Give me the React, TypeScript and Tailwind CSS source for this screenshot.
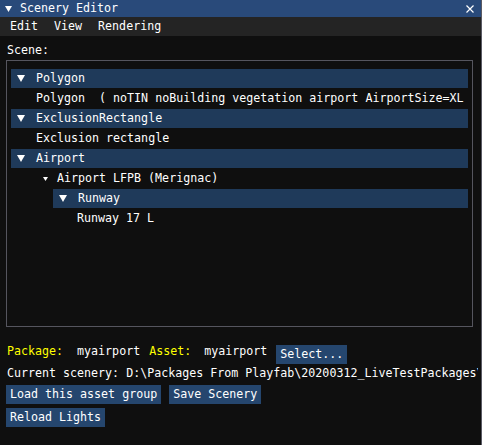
import React from "react";

const font = "font-['DejaVu_Sans_Mono','Liberation_Mono',monospace] text-[11.65px] leading-[15px]";

function Tri({ w = 8, h = 7 }: { w?: number; h?: number }) {
  return (
    <svg width={w} height={h} viewBox={`0 0 ${w} ${h}`} className="shrink-0">
      <polygon points={`0,0 ${w},0 ${w / 2},${h}`} fill="#ffffff" />
    </svg>
  );
}

function Header({ label, indent = 0 }: { label: string; indent?: number }) {
  return (
    <div
      className="flex h-[19px] items-center bg-[#1f3a5a] pl-[6px]"
      style={{ marginLeft: indent }}
    >
      <Tri />
      <span className="ml-[11px] whitespace-nowrap">{label}</span>
    </div>
  );
}

function Line({ children, indent }: { children: React.ReactNode; indent: number }) {
  return (
    <div className="flex h-[13px] items-center whitespace-nowrap" style={{ paddingLeft: indent }}>
      {children}
    </div>
  );
}

function Button({ children }: { children: React.ReactNode }) {
  return (
    <div className="flex h-[19px] items-center whitespace-nowrap bg-[#25466e] px-[4px]">
      {children}
    </div>
  );
}

export default function App() {
  return (
    <div
      className={`relative h-[445px] w-[482px] overflow-hidden border-r border-[#5a5a64] bg-[#0f0f0f] text-white ${font}`}
    >
      {/* title bar */}
      <div className="flex h-[17px] items-center bg-[#294a7a] pl-[5px] pr-[7px]">
        <Tri w={7} h={6} />
        <span className="ml-[8px] whitespace-nowrap">Scenery Editor</span>
        <svg width="8" height="8" viewBox="0 0 8 8" className="ml-auto">
          <path d="M0.5 0.5 L7.5 7.5 M7.5 0.5 L0.5 7.5" stroke="#ffffff" strokeWidth="1.2" />
        </svg>
      </div>

      {/* menu bar */}
      <div className="flex h-[19px] items-center gap-[16px] bg-[#242424] pl-[10px]">
        <span>Edit</span>
        <span>View</span>
        <span>Rendering</span>
      </div>

      <div className="flex flex-col pl-[6px] pr-[4px] pt-[8px]">
        <Line indent={1}>Scene:</Line>

        <div className="mt-[3px] flex h-[267px] w-[467px] flex-col gap-[4px] border border-[#55555e] pl-[4px] pr-[4px] pt-[8px]">
          <Header label="Polygon" />
          <Line indent={25}>Polygon&nbsp;&nbsp;( noTIN noBuilding vegetation airport AirportSize=XL</Line>
          <Header label="ExclusionRectangle" />
          <Line indent={25}>Exclusion rectangle</Line>
          <Header label="Airport" />
          <div className="flex h-[13px] items-center pl-[32px]">
            <Tri w={5} h={4} />
            <span className="ml-[9px] whitespace-nowrap">Airport LFPB (Merignac)</span>
          </div>
          <Header label="Runway" indent={42} />
          <Line indent={66}>Runway 17 L</Line>
        </div>

        <div className="mt-[18px] flex h-[19px] items-start whitespace-nowrap">
          <div className="flex h-[13px] items-center">
            <span className="ml-[1px] text-[#ffff00]">Package:</span>
            <span className="ml-[14px]">myairport</span>
            <span className="ml-[9px] text-[#ffff00]">Asset:</span>
            <span className="ml-[13px]">myairport</span>
          </div>
          <div className="ml-[9px]">
            <Button>Select...</Button>
          </div>
        </div>

        <div className="ml-[1px] mt-[3px] flex h-[13px] w-[471px] items-center overflow-hidden whitespace-nowrap">
          Current scenery: D:\Packages From Playfab\20200312_LiveTestPackages\myairport\
        </div>

        <div className="mt-[5px] flex gap-[8px]">
          <Button>Load this asset group</Button>
          <Button>Save Scenery</Button>
        </div>
        <div className="mt-[4px] flex">
          <Button>Reload Lights</Button>
        </div>
      </div>
    </div>
  );
}
